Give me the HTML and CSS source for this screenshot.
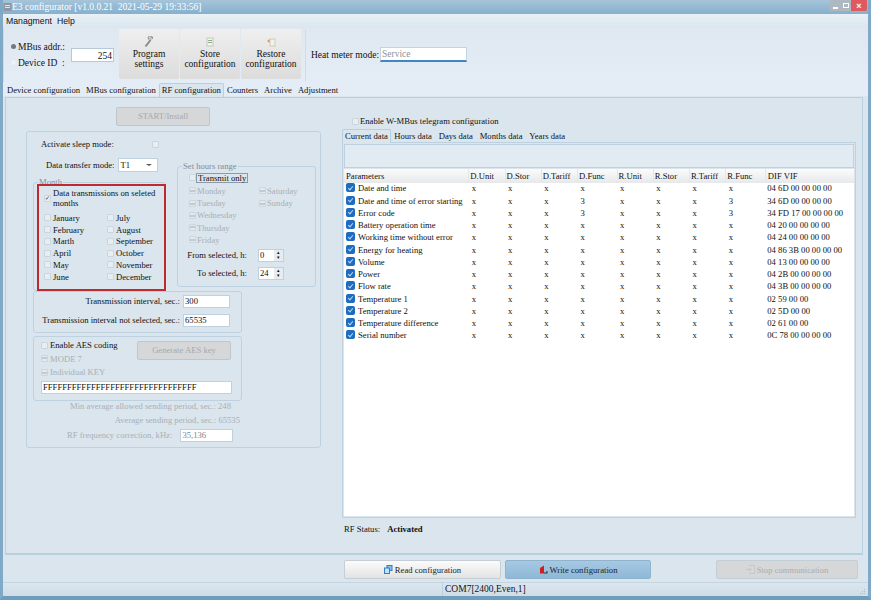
FILE: index.html
```html
<!DOCTYPE html>
<html>
<head>
    <meta charset="UTF-8">
    <title>E3 configurator</title>
    <link rel="stylesheet" href="styles.css">
</head>
<body>
    <div class="window">
        <div class="titlebar">
            <svg class="app-icon" width="9" height="10" viewBox="0 0 9 10"><rect x="0.5" y="1" width="8" height="8" fill="#8d98a3"/><rect x="2" y="3" width="5" height="1" fill="#e6e6e6"/><rect x="2" y="5" width="5" height="1" fill="#e6e6e6"/></svg>
            <span class="title-text">E3 configurator [v1.0.0.21&nbsp; 2021-05-29 19:33:56]</span>
            <div class="win-btns">
                <span class="win-btn"><i class="glyph-min"></i></span>
                <span class="win-btn"><i class="glyph-max"></i></span>
                <span class="win-btn close">×</span>
            </div>
        </div>

        <div class="menubar">
            <span>Managment</span>
            <span>Help</span>
        </div>

        <div class="toolbar">
            <div class="addr-group">
                <div class="addr-radios">
                    <label class="radio-row"><i class="radio on"></i>MBus addr.:</label>
                    <label class="radio-row"><i class="radio"></i>Device ID&nbsp; :</label>
                </div>
                <div class="addr-input">254</div>
            </div>
            <div class="tool-btns">
                <div class="tool-btn">
                    <svg width="10" height="12" viewBox="0 0 10 12"><path d="M1.5 10.5 L6.5 4" stroke="#8a8a8a" stroke-width="2" fill="none"/><path d="M5.5 4 a2.2 2.2 0 1 1 3 -1.5 l-1.3 -1 -1 1.2 1 1" stroke="#8a8a8a" stroke-width="1" fill="#d8d8d8"/></svg>
                    <span>Program<br>settings</span>
                </div>
                <div class="tool-btn">
                    <svg width="10" height="12" viewBox="0 0 10 12"><rect x="2" y="2" width="6" height="8" fill="#f2f4ee" stroke="#c2c8bc"/><path d="M3 4.5h4M3 6.5h4" stroke="#8fae86"/></svg>
                    <span>Store<br>configuration</span>
                </div>
                <div class="tool-btn">
                    <svg width="10" height="12" viewBox="0 0 10 12"><rect x="4" y="3" width="5" height="7" fill="#f4f1ea" stroke="#cfcabd"/><path d="M1 5 L3.5 3 L3.5 7 Z" fill="#e39a3c"/></svg>
                    <span>Restore<br>configuration</span>
                </div>
            </div>
            <div class="meter-mode">
                <span>Heat meter mode:</span>
                <div class="meter-input">Service</div>
            </div>
        </div>

        <div class="tabs main-tabs">
            <span class="tab">Device configuration</span>
            <span class="tab">MBus configuration</span>
            <span class="tab active">RF configuration</span>
            <span class="tab">Counters</span>
            <span class="tab">Archive</span>
            <span class="tab">Adjustment</span>
        </div>

        <div class="panel">
            <div class="left-col">
                <button class="flat-btn start-btn">START/Install</button>
                <div class="rf-box">
                    <div class="sleep-row">
                        <span>Activate sleep mode:</span>
                        <i class="check"></i>
                    </div>
                    <div class="mode-row">
                        <span>Data transfer mode:</span>
                        <div class="select">T1<b class="caret"></b></div>
                    </div>
                    <div class="range-area">
                        <div class="month-box">
                            <span class="legend">Month</span>
                            <label class="check-row top"><i class="check ticked">✓</i><span>Data transmissions on seleted months</span></label>
                            <div class="month-grid">
                                <label class="check-row"><i class="check"></i>January</label>
                                <label class="check-row"><i class="check"></i>July</label>
                                <label class="check-row"><i class="check"></i>February</label>
                                <label class="check-row"><i class="check"></i>August</label>
                                <label class="check-row"><i class="check"></i>Marth</label>
                                <label class="check-row"><i class="check"></i>September</label>
                                <label class="check-row"><i class="check"></i>April</label>
                                <label class="check-row"><i class="check"></i>October</label>
                                <label class="check-row"><i class="check"></i>May</label>
                                <label class="check-row"><i class="check"></i>November</label>
                                <label class="check-row"><i class="check"></i>June</label>
                                <label class="check-row"><i class="check"></i>December</label>
                            </div>
                            <div class="highlight"></div>
                        </div>
                        <div class="hours-box">
                            <span class="legend hours-legend">Set hours range</span>
                            <label class="check-row only"><i class="check"></i><span class="focus-text">Transmit only</span></label>
                            <div class="day-grid">
                                <label class="check-row muted"><i class="check dash"></i>Monday</label>
                                <label class="check-row muted"><i class="check dash"></i>Saturday</label>
                                <label class="check-row muted"><i class="check dash"></i>Tuesday</label>
                                <label class="check-row muted"><i class="check dash"></i>Sunday</label>
                                <label class="check-row muted"><i class="check dash"></i>Wednesday</label>
                                <span></span>
                                <label class="check-row muted"><i class="check dash"></i>Thursday</label>
                                <span></span>
                                <label class="check-row muted"><i class="check dash"></i>Friday</label>
                            </div>
                            <div class="spin-row from">
                                <span>From selected, h:</span>
                                <div class="spin">0<span class="spin-arrows"><b>▴</b><b>▾</b></span></div>
                            </div>
                            <div class="spin-row">
                                <span>To selected, h:</span>
                                <div class="spin">24<span class="spin-arrows"><b>▴</b><b>▾</b></span></div>
                            </div>
                        </div>
                    </div>
                    <div class="sub-box interval-box">
                        <div class="field-row">
                            <span>Transmission interval, sec.:</span>
                            <div class="text-input">300</div>
                        </div>
                        <div class="field-row">
                            <span>Transmission interval not selected, sec.:</span>
                            <div class="text-input">65535</div>
                        </div>
                    </div>
                    <div class="sub-box aes-box">
                        <div class="aes-top">
                            <div class="aes-checks">
                                <label class="check-row aes-enable"><i class="check"></i>Enable AES coding</label>
                                <label class="check-row muted"><i class="check dash"></i>MODE 7</label>
                                <label class="check-row muted"><i class="check dash"></i>Individual KEY</label>
                            </div>
                            <button class="flat-btn aes-btn">Generate AES key</button>
                        </div>
                        <div class="key-input">FFFFFFFFFFFFFFFFFFFFFFFFFFFFFFFF</div>
                    </div>
                    <div class="info-line min-line">Min average allowed sending period, sec.: 248</div>
                    <div class="info-line avg-line">Average sending period, sec.: 65535</div>
                    <div class="freq-row">
                        <span>RF frequency correction, kHz:</span>
                        <div class="freq-input">35,136</div>
                    </div>
                </div>
            </div>

            <div class="right-col">
                <label class="check-row wmbus"><i class="check"></i>Enable W-MBus telegram configuration</label>
                <div class="tabs sub-tabs">
                    <span class="tab active">Current data</span>
                    <span class="tab">Hours data</span>
                    <span class="tab">Days data</span>
                    <span class="tab">Months data</span>
                    <span class="tab">Years data</span>
                </div>
                <div class="tab-page">
                    <div class="blank-strip"></div>
                    <table class="params">
                        <thead>
                            <tr>
                                <th class="c-name">Parameters</th><th>D.Unit</th><th>D.Stor</th><th>D.Tariff</th><th class="c-wide">D.Func</th><th>R.Unit</th><th>R.Stor</th><th>R.Tariff</th><th class="c-wide">R.Func</th><th class="c-last">DIF VIF</th>
                            </tr>
                        </thead>
                        <tbody>
                            <tr><td class="c-name"><i class="tick"></i>Date and time</td><td>x</td><td>x</td><td>x</td><td>x</td><td>x</td><td>x</td><td>x</td><td>x</td><td class="c-last">04 6D 00 00 00 00</td></tr>
                            <tr><td class="c-name"><i class="tick"></i>Date and time of error starting</td><td>x</td><td>x</td><td>x</td><td>3</td><td>x</td><td>x</td><td>x</td><td>3</td><td class="c-last">34 6D 00 00 00 00</td></tr>
                            <tr><td class="c-name"><i class="tick"></i>Error code</td><td>x</td><td>x</td><td>x</td><td>3</td><td>x</td><td>x</td><td>x</td><td>3</td><td class="c-last">34 FD 17 00 00 00 00</td></tr>
                            <tr><td class="c-name"><i class="tick"></i>Battery operation time</td><td>x</td><td>x</td><td>x</td><td>x</td><td>x</td><td>x</td><td>x</td><td>x</td><td class="c-last">04 20 00 00 00 00</td></tr>
                            <tr><td class="c-name"><i class="tick"></i>Working time without error</td><td>x</td><td>x</td><td>x</td><td>x</td><td>x</td><td>x</td><td>x</td><td>x</td><td class="c-last">04 24 00 00 00 00</td></tr>
                            <tr><td class="c-name"><i class="tick"></i>Energy for heating</td><td>x</td><td>x</td><td>x</td><td>x</td><td>x</td><td>x</td><td>x</td><td>x</td><td class="c-last">04 86 3B 00 00 00 00</td></tr>
                            <tr><td class="c-name"><i class="tick"></i>Volume</td><td>x</td><td>x</td><td>x</td><td>x</td><td>x</td><td>x</td><td>x</td><td>x</td><td class="c-last">04 13 00 00 00 00</td></tr>
                            <tr><td class="c-name"><i class="tick"></i>Power</td><td>x</td><td>x</td><td>x</td><td>x</td><td>x</td><td>x</td><td>x</td><td>x</td><td class="c-last">04 2B 00 00 00 00</td></tr>
                            <tr><td class="c-name"><i class="tick"></i>Flow rate</td><td>x</td><td>x</td><td>x</td><td>x</td><td>x</td><td>x</td><td>x</td><td>x</td><td class="c-last">04 3B 00 00 00 00</td></tr>
                            <tr><td class="c-name"><i class="tick"></i>Temperature 1</td><td>x</td><td>x</td><td>x</td><td>x</td><td>x</td><td>x</td><td>x</td><td>x</td><td class="c-last">02 59 00 00</td></tr>
                            <tr><td class="c-name"><i class="tick"></i>Temperature 2</td><td>x</td><td>x</td><td>x</td><td>x</td><td>x</td><td>x</td><td>x</td><td>x</td><td class="c-last">02 5D 00 00</td></tr>
                            <tr><td class="c-name"><i class="tick"></i>Temperature difference</td><td>x</td><td>x</td><td>x</td><td>x</td><td>x</td><td>x</td><td>x</td><td>x</td><td class="c-last">02 61 00 00</td></tr>
                            <tr><td class="c-name"><i class="tick"></i>Serial number</td><td>x</td><td>x</td><td>x</td><td>x</td><td>x</td><td>x</td><td>x</td><td>x</td><td class="c-last">0C 78 00 00 00 00</td></tr>
                        </tbody>
                    </table>
                </div>
                <div class="rf-status"><span>RF Status:</span><strong>Activated</strong></div>
            </div>
        </div>

        <div class="actions">
            <button class="act-btn read">
                <svg width="9" height="9" viewBox="0 0 9 9"><rect x="3" y="0.5" width="5" height="5" fill="#8cc0ea" stroke="#2f7fc4"/><rect x="0.5" y="3" width="5" height="5.5" fill="#c6e0f5" stroke="#2f7fc4"/></svg>
                Read configuration
            </button>
            <button class="act-btn write">
                <svg width="9" height="9" viewBox="0 0 9 9"><path d="M1 8.5 V3 L5 0.5 V8.5 Z" fill="#d01f1f"/><path d="M5 8.5 H8.5 V6 H7.5 V7.5 H5 Z" fill="#333"/></svg>
                Write configuration
            </button>
            <button class="act-btn stop">
                <svg width="9" height="9" viewBox="0 0 9 9"><path d="M3 .5H8.5V8.5H3M0 4.5H5M3.5 3l1.5 1.5L3.5 6" fill="none" stroke="#c4c8cb"/></svg>
                Stop communication
            </button>
        </div>

        <div class="statusbar">
            <div class="status-port">COM7[2400,Even,1]</div>
            <svg class="grip" width="7" height="7" viewBox="0 0 7 7"><path d="M5 1h1v1H5zM3 3h1v1H3zM5 3h1v1H5zM1 5h1v1H1zM3 5h1v1H3zM5 5h1v1H5z" fill="#a9bccb"/></svg>
        </div>
    </div>
</body>
</html>
```

FILE: styles.css
```css
* {
    box-sizing: border-box;
}

body {
    margin: 0;
    font-family: "Liberation Serif", serif;
    font-size: 8.65px;
    color: #111;
    background: #dae5ee;
}

.window {
    width: 871px;
    height: 600px;
    display: flex;
    flex-direction: column;
    border-left: 3px solid #7fa9c6;
    border-right: 3px solid #7fa9c6;
    border-bottom: 4px solid #6e9dbd;
    background: #dae5ee;
    overflow: hidden;
}

.titlebar {
    height: 14px;
    margin: 0 -3px;
    padding-left: 3px;
    display: flex;
    align-items: center;
    background: linear-gradient(#a5c4da, #86b0cd);
    color: #fff;
}

.title-text {
    font-size: 9.5px;
}

.win-btns {
    margin-left: auto;
    margin-right: 4px;
    height: 11px;
    display: flex;
    align-self: flex-start;
}

.win-btn {
    width: 10.5px;
    height: 11px;
    background: #adb8c1;
    display: flex;
    align-items: center;
    justify-content: center;
}

.win-btn.close {
    width: 16px;
    background: #df5a5f;
    color: #fff;
    font-family: "Liberation Sans", sans-serif;
    font-size: 9px;
    font-weight: bold;
    border-radius: 0 0 2px 0;
}

.glyph-min {
    width: 5px;
    height: 2px;
    margin-top: 4px;
    background: #fff;
}

.glyph-max {
    width: 6px;
    height: 5px;
    border: 1px solid #fff;
}

.menubar {
    height: 14px;
    padding-left: 3px;
    display: flex;
    gap: 5px;
    align-items: center;
    font-family: "Liberation Sans", sans-serif;
    font-size: 8.7px;
    background: linear-gradient(#e9f0f6, #dbe6ef);
}

.toolbar {
    height: 54px;
    display: flex;
    align-items: center;
    background: linear-gradient(#dfe8f1, #e4ecf6);
    font-size: 9.5px;
}

.addr-group {
    width: 116px;
    padding-left: 7px;
    display: flex;
    align-items: center;
    align-self: stretch;
    border-left: 1px solid #cfdbe6;
}

.addr-radios {
    width: 60px;
    display: flex;
    flex-direction: column;
    gap: 5px;
}

.radio-row {
    height: 11px;
    display: flex;
    align-items: center;
    gap: 2px;
    white-space: nowrap;
}

.radio {
    width: 5px;
    height: 5px;
    border-radius: 50%;
    background: #eef2f6;
    box-shadow: 0 0 0 1px #e3e9ef;
}

.radio.on {
    background: #6f7a84;
}

.addr-input {
    width: 43px;
    height: 14px;
    padding-right: 1px;
    text-align: right;
    line-height: 14px;
    background: #fff;
    border: 1px solid #b6c9d8;
}

.tool-btns {
    display: flex;
    gap: 1px;
    align-self: stretch;
    padding: 1px 0 3px;
}

.tool-btn {
    width: 60px;
    display: flex;
    flex-direction: column;
    align-items: center;
    padding-top: 7px;
    text-align: center;
    line-height: 10.5px;
    background: linear-gradient(#efefef, #dcdcdc);
    border-radius: 2px;
}

.tool-btn svg {
    margin-bottom: 1px;
}

.meter-mode {
    height: 52px;
    margin-left: 4px;
    padding-left: 5px;
    display: flex;
    align-items: center;
    gap: 1px;
    border-left: 1px solid #cfdbe6;
    white-space: nowrap;
}

.meter-input {
    width: 87px;
    height: 15px;
    padding-left: 1px;
    color: #8e9499;
    line-height: 12px;
    background: #fff;
    border: 1px solid #c3d3df;
    border-bottom: 2px solid #3e86c6;
}

.tabs {
    display: flex;
    align-items: flex-end;
}

.tab {
    padding: 0 3px;
    height: 12px;
    line-height: 12px;
    white-space: nowrap;
}

.tab.active {
    height: 14px;
    padding: 0 2px;
    line-height: 12px;
    background: #dae5ee;
    border: 1px solid #b8cfe0;
    border-bottom: none;
    border-radius: 2px 2px 0 0;
    position: relative;
    top: 1px;
}

.main-tabs {
    height: 14px;
    padding-left: 1px;
    background: #e4ecf6;
}

.panel {
    height: 459px;
    margin: 1px 5px 0 2px;
    padding: 9px 0 0 20px;
    display: flex;
    border: 1px solid #b8cfe0;
    border-bottom: 2px solid #b8cfe0;
}

.left-col {
    width: 295px;
}

.flat-btn {
    display: block;
    height: 19px;
    font-family: inherit;
    font-size: 8.65px;
    color: #a5aaaf;
    background: #d5d7d8;
    border: 1px solid #c0c6ca;
    border-radius: 2px;
}

.start-btn {
    width: 94px;
    margin-left: 90px;
}

.rf-box {
    height: 317px;
    margin-top: 5px;
    border: 1px solid #bdd1e0;
    border-radius: 3px;
    padding-top: 7px;
}

.check {
    flex: none;
    width: 7px;
    height: 7px;
    display: inline-flex;
    align-items: center;
    justify-content: center;
    background: #e8edf1;
    border: 1px solid #cbd5dc;
    border-radius: 1px;
    font-style: normal;
    font-size: 6px;
    color: #333;
}

.check.dash {
    background: linear-gradient(#e3e9ee 0 1.5px, #c2c9cf 1.5px 3.5px, #e3e9ee 3.5px);
}

.check-row {
    display: flex;
    align-items: center;
    gap: 2px;
    white-space: nowrap;
}

.muted {
    color: #a9b0b6;
}

.sleep-row {
    height: 11px;
    padding-left: 14px;
    display: flex;
    align-items: center;
}

.sleep-row .check {
    margin-left: 38px;
}

.mode-row {
    height: 14px;
    margin-top: 8px;
    padding-left: 19px;
    display: flex;
    align-items: center;
    gap: 3px;
}

.select {
    width: 40px;
    height: 14px;
    padding-left: 2px;
    line-height: 12px;
    position: relative;
    background: #fff;
    border: 1px solid #bdd1e0;
}

.caret {
    position: absolute;
    right: 5px;
    top: 5px;
    border-left: 3px solid transparent;
    border-right: 3px solid transparent;
    border-top: 2px solid #555;
}

.range-area {
    display: flex;
    height: 125px;
    margin-top: -6px;
    padding-left: 6px;
}

.month-box {
    width: 133px;
    height: 109px;
    margin-top: 16px;
    position: relative;
    padding: 5px 0 0 10px;
    border: 1px solid #bdd1e0;
    border-radius: 3px;
}

.legend {
    position: absolute;
    left: 4px;
    top: -6px;
    padding: 0 1px;
    line-height: 10px;
    color: #7d8d9a;
    background: #dae5ee;
}

.top {
    white-space: normal;
    width: 118px;
    line-height: 10.5px;
    height: 21px;
}

.month-grid {
    margin-top: 3px;
    display: grid;
    grid-template-columns: 63px auto;
    grid-auto-rows: 11.8px;
}

.highlight {
    position: absolute;
    left: 3px;
    top: 1px;
    width: 129px;
    height: 107px;
    border: 2px solid #bd2a30;
    pointer-events: none;
}

.hours-box {
    width: 139px;
    height: 121px;
    margin-left: 11px;
    position: relative;
    padding: 6px 0 0 11px;
    border: 1px solid #bdd1e0;
    border-radius: 3px;
}

.only {
    gap: 0;
}

.focus-text {
    padding: 0 1px;
    border: 1px solid #8a9aa6;
    line-height: 8px;
}

.day-grid {
    margin-top: 2px;
    display: grid;
    grid-template-columns: 70px auto;
    grid-auto-rows: 12.2px;
}

.day-grid .check-row {
    gap: 1px;
}

.spin-row {
    height: 13px;
    margin-top: 5px;
    margin-left: -11px;
    padding-right: 31px;
    display: flex;
    align-items: center;
    justify-content: flex-end;
    gap: 11px;
}

.spin-row.from {
    margin-top: 3px;
}

.spin {
    width: 26px;
    height: 13px;
    padding-left: 1px;
    line-height: 11px;
    position: relative;
    background: #fff;
    border: 1px solid #bdd1e0;
}

.spin-arrows {
    position: absolute;
    right: 0;
    top: 0;
    width: 9px;
    height: 11px;
    display: flex;
    flex-direction: column;
    font-size: 5px;
    line-height: 5.5px;
    text-align: center;
    background: #e8ecef;
}

.spin-arrows b {
    font-weight: normal;
}

.sub-box {
    width: 209px;
    margin-left: 6px;
    border: 1px solid #bdd1e0;
    border-radius: 3px;
}

.interval-box {
    height: 42px;
    padding-top: 3px;
}

.field-row {
    height: 13px;
    margin-bottom: 6px;
    padding-right: 11px;
    display: flex;
    justify-content: flex-end;
    align-items: center;
    gap: 3px;
}

.text-input {
    width: 47px;
    height: 13px;
    padding-left: 1px;
    line-height: 11px;
    background: #fff;
    border: 1px solid #bdd1e0;
}

.aes-box {
    height: 65px;
    margin-top: 3px;
    padding: 3px 0 0 7px;
}

.aes-top {
    display: flex;
    height: 41px;
}

.aes-checks {
    width: 96px;
    display: flex;
    flex-direction: column;
    gap: 2.5px;
}

.aes-checks .check-row {
    height: 11px;
}

.aes-btn {
    width: 94px;
    height: 19px;
    margin-top: 1px;
}

.key-input {
    width: 191px;
    height: 13px;
    padding-left: 1px;
    line-height: 11px;
    background: #fff;
    border: 1px solid #bdd1e0;
}

.info-line {
    color: #a9b0b6;
    text-align: right;
    line-height: 11px;
}

.min-line {
    width: 204px;
}

.avg-line {
    margin-top: 3px;
    width: 213px;
}

.freq-row {
    height: 13px;
    margin-top: 3px;
    padding-left: 40px;
    display: flex;
    align-items: center;
    gap: 8px;
    color: #a9b0b6;
}

.freq-input {
    width: 53px;
    height: 13px;
    padding-left: 1px;
    line-height: 11px;
    background: #fff;
    border: 1px solid #bdd1e0;
    color: #7e868c;
}

.right-col {
    width: 514px;
    margin-left: 21px;
}

.wmbus {
    height: 11px;
    margin: 9px 0 0 10px;
    gap: 1px;
}

.sub-tabs {
    height: 14px;
    margin-top: 1px;
}

.sub-tabs .tab:not(.active) {
    padding: 0 3.4px;
}

.tab-page {
    height: 376px;
    padding: 1px 1px;
    border: 1px solid #bdd1e0;
}

.blank-strip {
    height: 24px;
    border: 1px solid #bdd1e0;
    background: #e2eaf2;
}

.params {
    width: 510px;
    height: 347px;
    display: block;
    margin-top: 1px;
    background: #fff;
    border-collapse: collapse;
    table-layout: fixed;
}

.params tr {
    height: 12.25px;
}

.params th {
    height: 14px;
    width: 36.6px;
    padding: 0 0 0 1px;
    font-weight: normal;
    text-align: left;
    background: linear-gradient(#fbfbfb, #e6e8ea);
    border-right: 1px solid #e4e6e8;
}

.params td {
    width: 36.6px;
    padding: 0 0 0 3px;
    line-height: 11px;
    white-space: nowrap;
}

.params .c-name {
    width: 125px;
    padding-left: 2px;
    white-space: nowrap;
}

.params .c-wide {
    width: 40px;
}

.params .c-last {
    width: 89px;
    padding-left: 2px;
    border-right: none;
}

.tick {
    display: inline-block;
    width: 9px;
    height: 9px;
    margin-right: 3px;
    vertical-align: -1px;
    background: #1e6cc0;
    border-radius: 2px;
    position: relative;
}

.tick::after {
    content: "";
    position: absolute;
    left: 3px;
    top: 1.5px;
    width: 2px;
    height: 4px;
    border-right: 1px solid #bcd6f0;
    border-bottom: 1px solid #bcd6f0;
    transform: rotate(40deg);
}

.rf-status {
    margin-top: 6px;
    padding-left: 2px;
    display: flex;
    gap: 7px;
}

.actions {
    height: 27px;
    padding: 5px 0 0 341px;
    display: flex;
}

.act-btn {
    height: 19px;
    display: flex;
    align-items: center;
    justify-content: center;
    gap: 2px;
    font-family: inherit;
    font-size: 8.65px;
    color: #222;
    border: 1px solid #c3ced6;
    border-radius: 2px;
}

.act-btn.read {
    width: 157px;
    background: linear-gradient(#fbfbfb, #e3e3e3);
}

.act-btn.write {
    width: 146px;
    margin-left: 4px;
    background: linear-gradient(#a7c9e2, #8db8d8);
    border-color: #8fb3cd;
}

.act-btn.stop {
    width: 142px;
    margin-left: 65px;
    color: #a9aeb2;
    background: #d5d7d8;
}

.statusbar {
    flex: 1;
    display: flex;
    background: linear-gradient(#dbe6ee, #cfdde8);
    border-top: 1px solid #c5d5e1;
}

.status-port {
    margin-left: 439px;
    padding-left: 2px;
    font-size: 9.5px;
    line-height: 13px;
    border-left: 1px solid #bfd0dd;
}

.grip {
    margin: 5px 2px 0 auto;
}
```
